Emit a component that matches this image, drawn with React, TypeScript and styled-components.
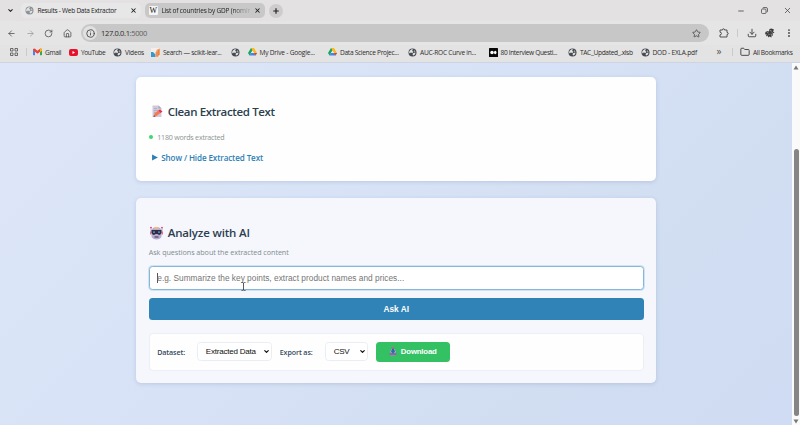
import React from "react";
import styled, { createGlobalStyle } from "styled-components";
import {
  ArrowLeft, ArrowRight, RotateCw, House, Info, Star, Download as DownloadIcon,
  EllipsisVertical, Folder, X, Plus, Minus, ChevronDown,
} from "lucide-react";

const GlobalStyle = createGlobalStyle`
  * { box-sizing: border-box; }
  body { margin: 0; overflow: hidden; font-family: "Open Sans", "Noto Sans", sans-serif; }
`;

const Window = styled.div`
  width: 800px;
  height: 425px;
  display: flex;
  flex-direction: column;
  overflow: hidden;
`;

const TabStrip = styled.div`
  height: 21px;
  flex: none;
  display: flex;
  align-items: center;
  background: #e3e1e2;
  color: #222;
`;

const TabMenu = styled.div`
  width: 21px;
  flex: none;
  display: flex;
  justify-content: center;
`;

const Tab = styled.div<{ $width: number; $background: string; $spacing: number; $inset: number }>`
  width: ${(p) => p.$width}px;
  height: 15px;
  flex: none;
  margin-right: 4px;
  display: flex;
  align-items: center;
  gap: ${(p) => p.$inset}px;
  padding: 0 4.5px 0 ${(p) => p.$inset}px;
  border-radius: 5px;
  background: ${(p) => p.$background};
  font-size: 6.5px;
  letter-spacing: ${(p) => p.$spacing}px;
  white-space: nowrap;
  svg { flex: none; }
`;

const TabTitle = styled.span<{ $fade?: boolean }>`
  flex: 1;
  overflow: hidden;
  ${(p) => p.$fade && "mask-image: linear-gradient(90deg, #000 80%, rgba(0,0,0,.2) 97%);"}
`;

const NewTab = styled.div`
  width: 14px;
  height: 14px;
  border-radius: 50%;
  background: #cecccd;
  display: grid;
  place-items: center;
`;

const WindowControls = styled.div`
  margin-left: auto;
  display: flex;
  align-items: center;
  gap: 15.5px;
  padding-right: 8px;
  color: #444;
`;

const Toolbar = styled.div`
  height: 24px;
  flex: none;
  display: flex;
  align-items: center;
  padding: 0 7px;
  background: #e6e5e5;
  color: #4a4a4a;
`;

const NavButtons = styled.div`
  width: 74px;
  display: flex;
  align-items: center;
  gap: 9.7px;
`;

const AddressBar = styled.div`
  width: 628px;
  height: 18px;
  display: flex;
  align-items: center;
  gap: 4px;
  padding: 0 8px 0 2px;
  border-radius: 9px;
  background: #c8c7c7;
`;

const SiteInfo = styled.div`
  width: 14px;
  height: 14px;
  border-radius: 50%;
  background: #e2e1e1;
  display: grid;
  place-items: center;
`;

const Url = styled.div`
  flex: 1;
  font-size: 7.5px;
  letter-spacing: -0.34px;
  color: #2b2b2b;
  span { color: #5f5f5f; }
`;

const ToolbarActions = styled.div`
  flex: 1;
  display: flex;
  align-items: center;
  justify-content: space-between;
  padding-left: 9.5px;
  margin-right: -1px;
`;

const Divider = styled.i`
  width: 1px;
  height: 8px;
  flex: none;
  background: #c9cacd;
`;

const Bookmarks = styled.div`
  height: 18px;
  flex: none;
  display: flex;
  align-items: center;
  padding: 0 0 3px 9.5px;
  background: #e4e3e3;
  border-bottom: 1px solid #cdd5e2;
  color: #2c2c2c;
`;

const Bookmark = styled.div<{ $width: number; $spacing?: number; $gap?: number }>`
  width: ${(p) => p.$width}px;
  flex: none;
  display: flex;
  align-items: center;
  gap: ${(p) => p.$gap ?? 3}px;
  font-size: 6.6px;
  line-height: 9px;
  letter-spacing: ${(p) => (p.$spacing ?? 0) - 0.15}px;
  white-space: nowrap;
  svg { flex: none; }
`;

const More = styled.div`
  width: 15.5px;
  flex: none;
  font-size: 10px;
  line-height: 10px;
  padding-bottom: 2px;
  color: #555;
`;

const Viewport = styled.div`
  flex: 1;
  display: flex;
  min-height: 0;
`;

const Page = styled.main`
  flex: 1;
  display: flex;
  flex-direction: column;
  align-items: center;
  gap: 17px;
  padding: 14.4px 0 0;
  background: linear-gradient(135deg, #dee7f9 0%, #d7e2f6 45%, #d1ddf1 75%, #cfdcf3 100%);
`;

const Card = styled.section<{ $height: number; $tinted?: boolean }>`
  width: 520.5px;
  height: ${(p) => p.$height}px;
  flex: none;
  padding: 0 12.5px 0 13px;
  border-radius: 5px;
  background: ${(p) => (p.$tinted ? "#f5f7fd" : "#fefefe")};
  box-shadow: 0 1px 4px rgba(70, 100, 150, 0.2);
`;

const Heading = styled.h2<{ $spacing: number; $top: number }>`
  display: flex;
  align-items: center;
  gap: 4px;
  height: 16px;
  margin: ${(p) => p.$top}px 0 0;
  font-size: 11.5px;
  line-height: 16px;
  font-weight: 600;
  letter-spacing: ${(p) => p.$spacing}px;
  color: #2c3e50;
`;

const WordCount = styled.p`
  display: flex;
  align-items: center;
  gap: 4px;
  height: 10px;
  margin: 12px 0 0;
  font-size: 7.1px;
  letter-spacing: -0.22px;
  color: #8c9494;
`;

const StatusDot = styled.i`
  width: 4.5px;
  height: 4.5px;
  border-radius: 50%;
  background: #36da70;
`;

const Disclosure = styled.div`
  display: flex;
  align-items: center;
  gap: 3px;
  height: 12px;
  margin: 9.5px 0 0 3.5px;
  font-size: 8.1px;
  font-weight: 600;
  letter-spacing: -0.12px;
  color: #2e80b4;
`;

const Hint = styled.p`
  height: 10px;
  margin: 6px 0 0;
  font-size: 7.2px;
  line-height: 10px;
  letter-spacing: -0.05px;
  color: #7f8c8d;
`;

const Prompt = styled.div`
  position: relative;
  height: 23.5px;
  margin-top: 9px;
  padding: 0 0 1px 7.5px;
  display: flex;
  align-items: center;
  border: 1px solid #85b7d8;
  border-radius: 3.5px;
  background: #fff;
  box-shadow: 0 0 0 1px #cfe4f3;
  font-family: "Liberation Sans", Arial, sans-serif;
  font-size: 8.3px;
  letter-spacing: 0.018px;
  color: #757575;
`;

const Caret = styled.i`
  width: 1px;
  height: 10px;
  margin-right: -1px;
  background: #555;
`;

const TextCursor = styled.svg`
  position: absolute;
  left: 91px;
  top: 15px;
`;

const AskButton = styled.button`
  display: block;
  width: 100%;
  height: 22.5px;
  margin: 8px 0 0;
  padding: 0;
  border: 0;
  border-radius: 3.5px;
  background: #3083b6;
  color: #fff;
  font: bold 8.3px "Liberation Sans", Arial, sans-serif;
  letter-spacing: 0.03px;
`;

const ExportBar = styled.div`
  height: 38px;
  margin-top: 12.3px;
  padding-left: 7.5px;
  display: flex;
  align-items: center;
  border: 1px solid #eceff6;
  border-radius: 4px;
  background: #fefeff;
`;

const FieldLabel = styled.label<{ $width: number }>`
  width: ${(p) => p.$width}px;
  font-size: 7.1px;
  letter-spacing: -0.1px;
  font-weight: 600;
  color: #34495e;
`;

const SelectBox = styled.div<{ $width: number; $spacing: number }>`
  width: ${(p) => p.$width}px;
  height: 19px;
  margin-right: 8px;
  padding: 0 1px 0 8px;
  display: flex;
  align-items: center;
  justify-content: space-between;
  border: 1px solid #eaeef4;
  border-radius: 3.5px;
  background: #fff;
  font-family: "Liberation Sans", Arial, sans-serif;
  font-size: 8px;
  letter-spacing: ${(p) => p.$spacing}px;
  color: #111;
`;

const DownloadButton = styled.button`
  width: 74px;
  height: 20px;
  padding: 0;
  display: flex;
  align-items: center;
  justify-content: center;
  gap: 4px;
  border: 0;
  border-radius: 3.5px;
  background: #33c163;
  color: #fff;
  font: bold 7.8px "Liberation Sans", Arial, sans-serif;
  letter-spacing: -0.18px;
`;

const Scrollbar = styled.div`
  width: 8px;
  display: flex;
  flex-direction: column;
  align-items: center;
  justify-content: space-between;
  padding: 2px 0 1px;
  background: #fafafa;
`;

const Thumb = styled.div`
  width: 5px;
  height: 267px;
  margin-top: 75px;
  border-radius: 3px;
  background: #858585;
`;

const Globe = ({ color = "#444a50", size = 9 }: { color?: string; size?: number }) => (
  <svg width={size} height={size} viewBox="0 0 18 18">
    <circle cx="9" cy="9" r="8" fill={color} />
    <path d="M3 6c3-4 6-4 7-3L8 6l3 1-2 3-4-1-1 2-2-2zM11 10l4-1c0 4-3 6-5 6l-1-3zM12 4l3 3-2 1z" fill="#e4e3e3" />
  </svg>
);

const Drive = () => (
  <svg width="9" height="8" viewBox="0 0 18 16">
    <path d="M6 0h6L6 10 3 15 0 10z" fill="#19a463" />
    <path d="M6 0h6l6 10h-6z" fill="#fbbc1b" />
    <path d="M6 10h12l-3 5H3z" fill="#4285f4" />
    <path d="M12 10h6l-3 5z" fill="#ea4335" />
    <path d="M9 5l3 5H6z" fill="#e9e9e9" />
  </svg>
);

const Gmail = () => (
  <svg width="9" height="8" viewBox="0 0 18 15">
    <path d="M0 3l4 3v8H1L0 13z" fill="#4285f4" />
    <path d="M18 3l-4 3v8h3l1-1z" fill="#34a853" />
    <path d="M0 2Q2 0 4 1l5 4 5-4q3-1 4 1v2l-9 7-9-7z" fill="#ea4335" />
    <path d="M14 1q4-1 4 2v2l-4 3z" fill="#fbbc04" />
  </svg>
);

const YouTube = () => (
  <svg width="9" height="7" viewBox="0 0 18 14">
    <rect width="18" height="14" rx="4" fill="#e8112c" />
    <path d="M7 4l5 3-5 3z" fill="#fff" />
  </svg>
);

const Scikit = () => (
  <svg width="9" height="9" viewBox="0 0 18 18">
    <rect width="18" height="18" fill="#f1efed" />
    <path d="M0 8h4l5 5v5H0z" fill="#3499cd" />
    <path d="M9 18V9l3-6 6-2v12l-4 5z" fill="#f3a067" />
    <path d="M12 16V8m3 6V4" stroke="#d66c35" strokeWidth="1.2" />
  </svg>
);

const Medium = () => (
  <svg width="9" height="9" viewBox="0 0 18 18">
    <rect width="18" height="18" rx="1" fill="#080808" />
    <circle cx="6" cy="9" r="3.5" fill="#fff" />
    <ellipse cx="12.5" cy="9" rx="2.5" ry="3.3" fill="#fff" />
  </svg>
);

const WikiBadge = styled.span`
  width: 9px;
  height: 9px;
  flex: none;
  background: #f5f5f5;
  border-radius: 1px;
  font: 8px/9px "Liberation Serif", serif;
  letter-spacing: 0;
  text-align: center;
  color: #111;
`;

const AppsGrid = () => (
  <svg width="8" height="8" viewBox="0 0 16 16" fill="none" stroke="#555" strokeWidth="1.7">
    <path d="M1 1h5v5H1zM10 1h5v5h-5zM1 10h5v5H1zM10 10h5v5h-5z" />
  </svg>
);

const Extension = () => (
  <svg width="10" height="10" viewBox="0 0 20 20" fill="none" stroke="#4a4a4a" strokeWidth="1.9" strokeLinejoin="round">
    <path d="M2 4h5q0-2.5 2-2.5T11 4h5v5q2.5 0 2.5 2T16 13v5H2v-4.5q3 0 3-2.5T2 8.5z" />
  </svg>
);

const Restore = () => (
  <svg width="7" height="7" viewBox="0 0 14 14" fill="none" stroke="#444" strokeWidth="1.5">
    <rect x="1" y="4" width="9" height="9" rx="2" />
    <path d="M4 3V2q0-1 1-1h5q3 0 3 3v5q0 1-2 1" />
  </svg>
);

const Avatar = () => (
  <svg width="10" height="10" viewBox="0 0 20 20">
    <path d="M1 8l4-2 3 1 1-5 4-1 5 2-2 4 3 2-4 2 1 5-3-2 0 5-4-2-2 2-2-4-3 2 1-5-3 1z" fill="#3d3d3d" />
    <path d="M4 8l3 2M10 5l3 1M11 12l3 1M7 14l2-2M13 8l2 1" stroke="#b5b5b5" strokeWidth="1.5" />
  </svg>
);

const Memo = () => (
  <svg width="15" height="13" viewBox="0 0 30 26">
    <path d="M7 1h12l6 6v17H7z" fill="#cfcadb" />
    <path d="M19 1v6h6z" fill="#aaa2bb" />
    <path d="M10 7h6M10 11h8M10 15h5" stroke="#aaa3b9" strokeWidth="1.4" />
    <path d="M9 24l2-7 9-7 4 5-9 7z" fill="#f37a55" />
    <path d="M19 11l3-2 5 4-4 3z" fill="#e5324e" />
    <path d="M9 24l1-4 3 3z" fill="#8b4a48" />
  </svg>
);

const Robot = () => (
  <svg width="15" height="14" viewBox="0 0 30 28">
    <path d="M4 3v10M26 3v10" stroke="#a89ac0" strokeWidth="1.6" />
    <circle cx="4" cy="3" r="1.7" fill="#e5355b" />
    <circle cx="26" cy="3" r="1.7" fill="#e5355b" />
    <path d="M2 11h3v6H2zM25 11h3v6h-3z" fill="#e46a85" />
    <path d="M5 7q3-5 10-5t10 5v14q-2 6-10 6T5 21z" fill="#b9abcf" />
    <path d="M11 2h8v4h-8z" fill="#efbb75" />
    <path d="M5 8h20v6q-2 4-5 4l-3-2h-4l-3 2q-3 0-5-4z" fill="#2f2c47" />
    <path d="M8 12h4M18 12h4" stroke="#58a5d8" strokeWidth="2.5" />
    <path d="M11 22h8" stroke="#584869" strokeWidth="2.6" />
  </svg>
);

const Inbox = () => (
  <svg width="8" height="9" viewBox="0 0 14 16">
    <path d="M2 7l2-3h6l2 3v8H2z" fill="#c0afd2" />
    <path d="M1 10h12v5H1z" fill="#81709c" />
    <path d="M5 2h4v4h3l-5 6-5-6h3z" fill="#236fa9" />
    <path d="M5 0h4v3H5z" fill="#d85d80" />
  </svg>
);

const Arrow = ({ down }: { down?: boolean }) => (
  <svg width="6" height="5" viewBox="0 0 12 10">
    <path d={down ? "M1 1h10L6 9z" : "M1 9h10L6 1z"} fill="#777" />
  </svg>
);

export default function App() {
  return (
    <Window>
      <GlobalStyle />
      <TabStrip>
        <TabMenu><ChevronDown size={7} strokeWidth={3.5} /></TabMenu>
        <Tab $width={120} $background="#e8e7e7" $spacing={-0.255} $inset={3.7}>
          <Globe color="#8a9096" />
          <TabTitle>Results - Web Data Extractor</TabTitle>
          <X size={7} strokeWidth={3.5} />
        </Tab>
        <Tab $width={120} $background="#c9c8c8" $spacing={-0.18} $inset={3.7}>
          <WikiBadge>W</WikiBadge>
          <TabTitle $fade>List of countries by GDP (nomin</TabTitle>
          <X size={7} strokeWidth={3.5} />
        </Tab>
        <NewTab><Plus size={8} strokeWidth={3.5} /></NewTab>
        <WindowControls>
          <Minus size={8} strokeWidth={2.4} />
          <Restore />
          <X size={9} strokeWidth={2} />
        </WindowControls>
      </TabStrip>
      <Toolbar>
        <NavButtons>
          <ArrowLeft size={9} />
          <ArrowRight size={9} color="#999" />
          <RotateCw size={9} />
          <House size={9} />
        </NavButtons>
        <AddressBar>
          <SiteInfo><Info size={9} strokeWidth={2.4} /></SiteInfo>
          <Url>127.0.0.1<span>:5000</span></Url>
          <Star size={9} strokeWidth={2.2} />
        </AddressBar>
        <ToolbarActions>
          <Extension />
          <Divider />
          <DownloadIcon size={10} strokeWidth={2.3} />
          <Avatar />
          <EllipsisVertical size={10} strokeWidth={2.6} />
        </ToolbarActions>
      </Toolbar>
      <Bookmarks>
        <Bookmark $width={16}><AppsGrid /></Bookmark>
        <Bookmark $width={7.5}><Divider /></Bookmark>
        <Bookmark $width={36} $spacing={-0.217}><Gmail />Gmail</Bookmark>
        <Bookmark $width={44} $spacing={-0.27}><YouTube />YouTube</Bookmark>
        <Bookmark $width={38} $spacing={-0.087}><Globe />Videos</Bookmark>
        <Bookmark $width={80} $spacing={-0.15}><Scikit />Search — scikit-lear...</Bookmark>
        <Bookmark $width={16.5}><Globe /></Bookmark>
        <Bookmark $width={80.5} $spacing={-0.066}><Drive />My Drive - Google...</Bookmark>
        <Bookmark $width={80} $spacing={-0.152}><Drive />Data Science Projec...</Bookmark>
        <Bookmark $width={80.5} $spacing={-0.11}><Globe />AUC-ROC Curve in...</Bookmark>
        <Bookmark $width={79.5} $spacing={-0.213}><Medium />80 Interview Questi...</Bookmark>
        <Bookmark $width={73} $spacing={-0.19}><Globe />TAC_Updated_.xlsb</Bookmark>
        <Bookmark $width={75.5} $spacing={-0.06} $gap={2.5}><Globe />DOD - EXLA.pdf</Bookmark>
        <More>»</More>
        <Bookmark $width={7.5}><Divider /></Bookmark>
        <Bookmark $width={55} $spacing={-0.189} $gap={3.5}><Folder size={10} />All Bookmarks</Bookmark>
      </Bookmarks>
      <Viewport>
        <Page>
          <Card $height={104}>
            <Heading $top={26.5} $spacing={-0.353}><Memo />Clean Extracted Text</Heading>
            <WordCount><StatusDot />1180 words extracted</WordCount>
            <Disclosure>
              <svg width="6" height="7" viewBox="0 0 10 12"><path d="M0 1l10 5L0 11z" fill="#2e80b4" /></svg>
              Show / Hide Extracted Text
            </Disclosure>
          </Card>
          <Card $height={184.5} $tinted>
            <Heading $top={27} $spacing={-0.173}><Robot />Analyze with AI</Heading>
            <Hint>Ask questions about the extracted content</Hint>
            <Prompt>
              <Caret />
              e.g. Summarize the key points, extract product names and prices...
              <TextCursor width="5" height="9" viewBox="0 0 5 9" fill="none" stroke="#333">
                <path d="M.5.5h1.2l.8.5.8-.5h1.2M2.5 1v7M.5 8.5h1.2l.8-.5.8.5h1.2" strokeWidth=".8" />
              </TextCursor>
            </Prompt>
            <AskButton>Ask AI</AskButton>
            <ExportBar>
              <FieldLabel $width={39.5}>Dataset:</FieldLabel>
              <SelectBox $width={75} $spacing={-0.2}>Extracted Data<ChevronDown size={7} strokeWidth={4} /></SelectBox>
              <FieldLabel $width={45}>Export as:</FieldLabel>
              <SelectBox $width={43} $spacing={-0.3}>CSV<ChevronDown size={7} strokeWidth={4} /></SelectBox>
              <DownloadButton><Inbox />Download</DownloadButton>
            </ExportBar>
          </Card>
        </Page>
        <Scrollbar>
          <Arrow />
          <Thumb />
          <Arrow down />
        </Scrollbar>
      </Viewport>
    </Window>
  );
}
